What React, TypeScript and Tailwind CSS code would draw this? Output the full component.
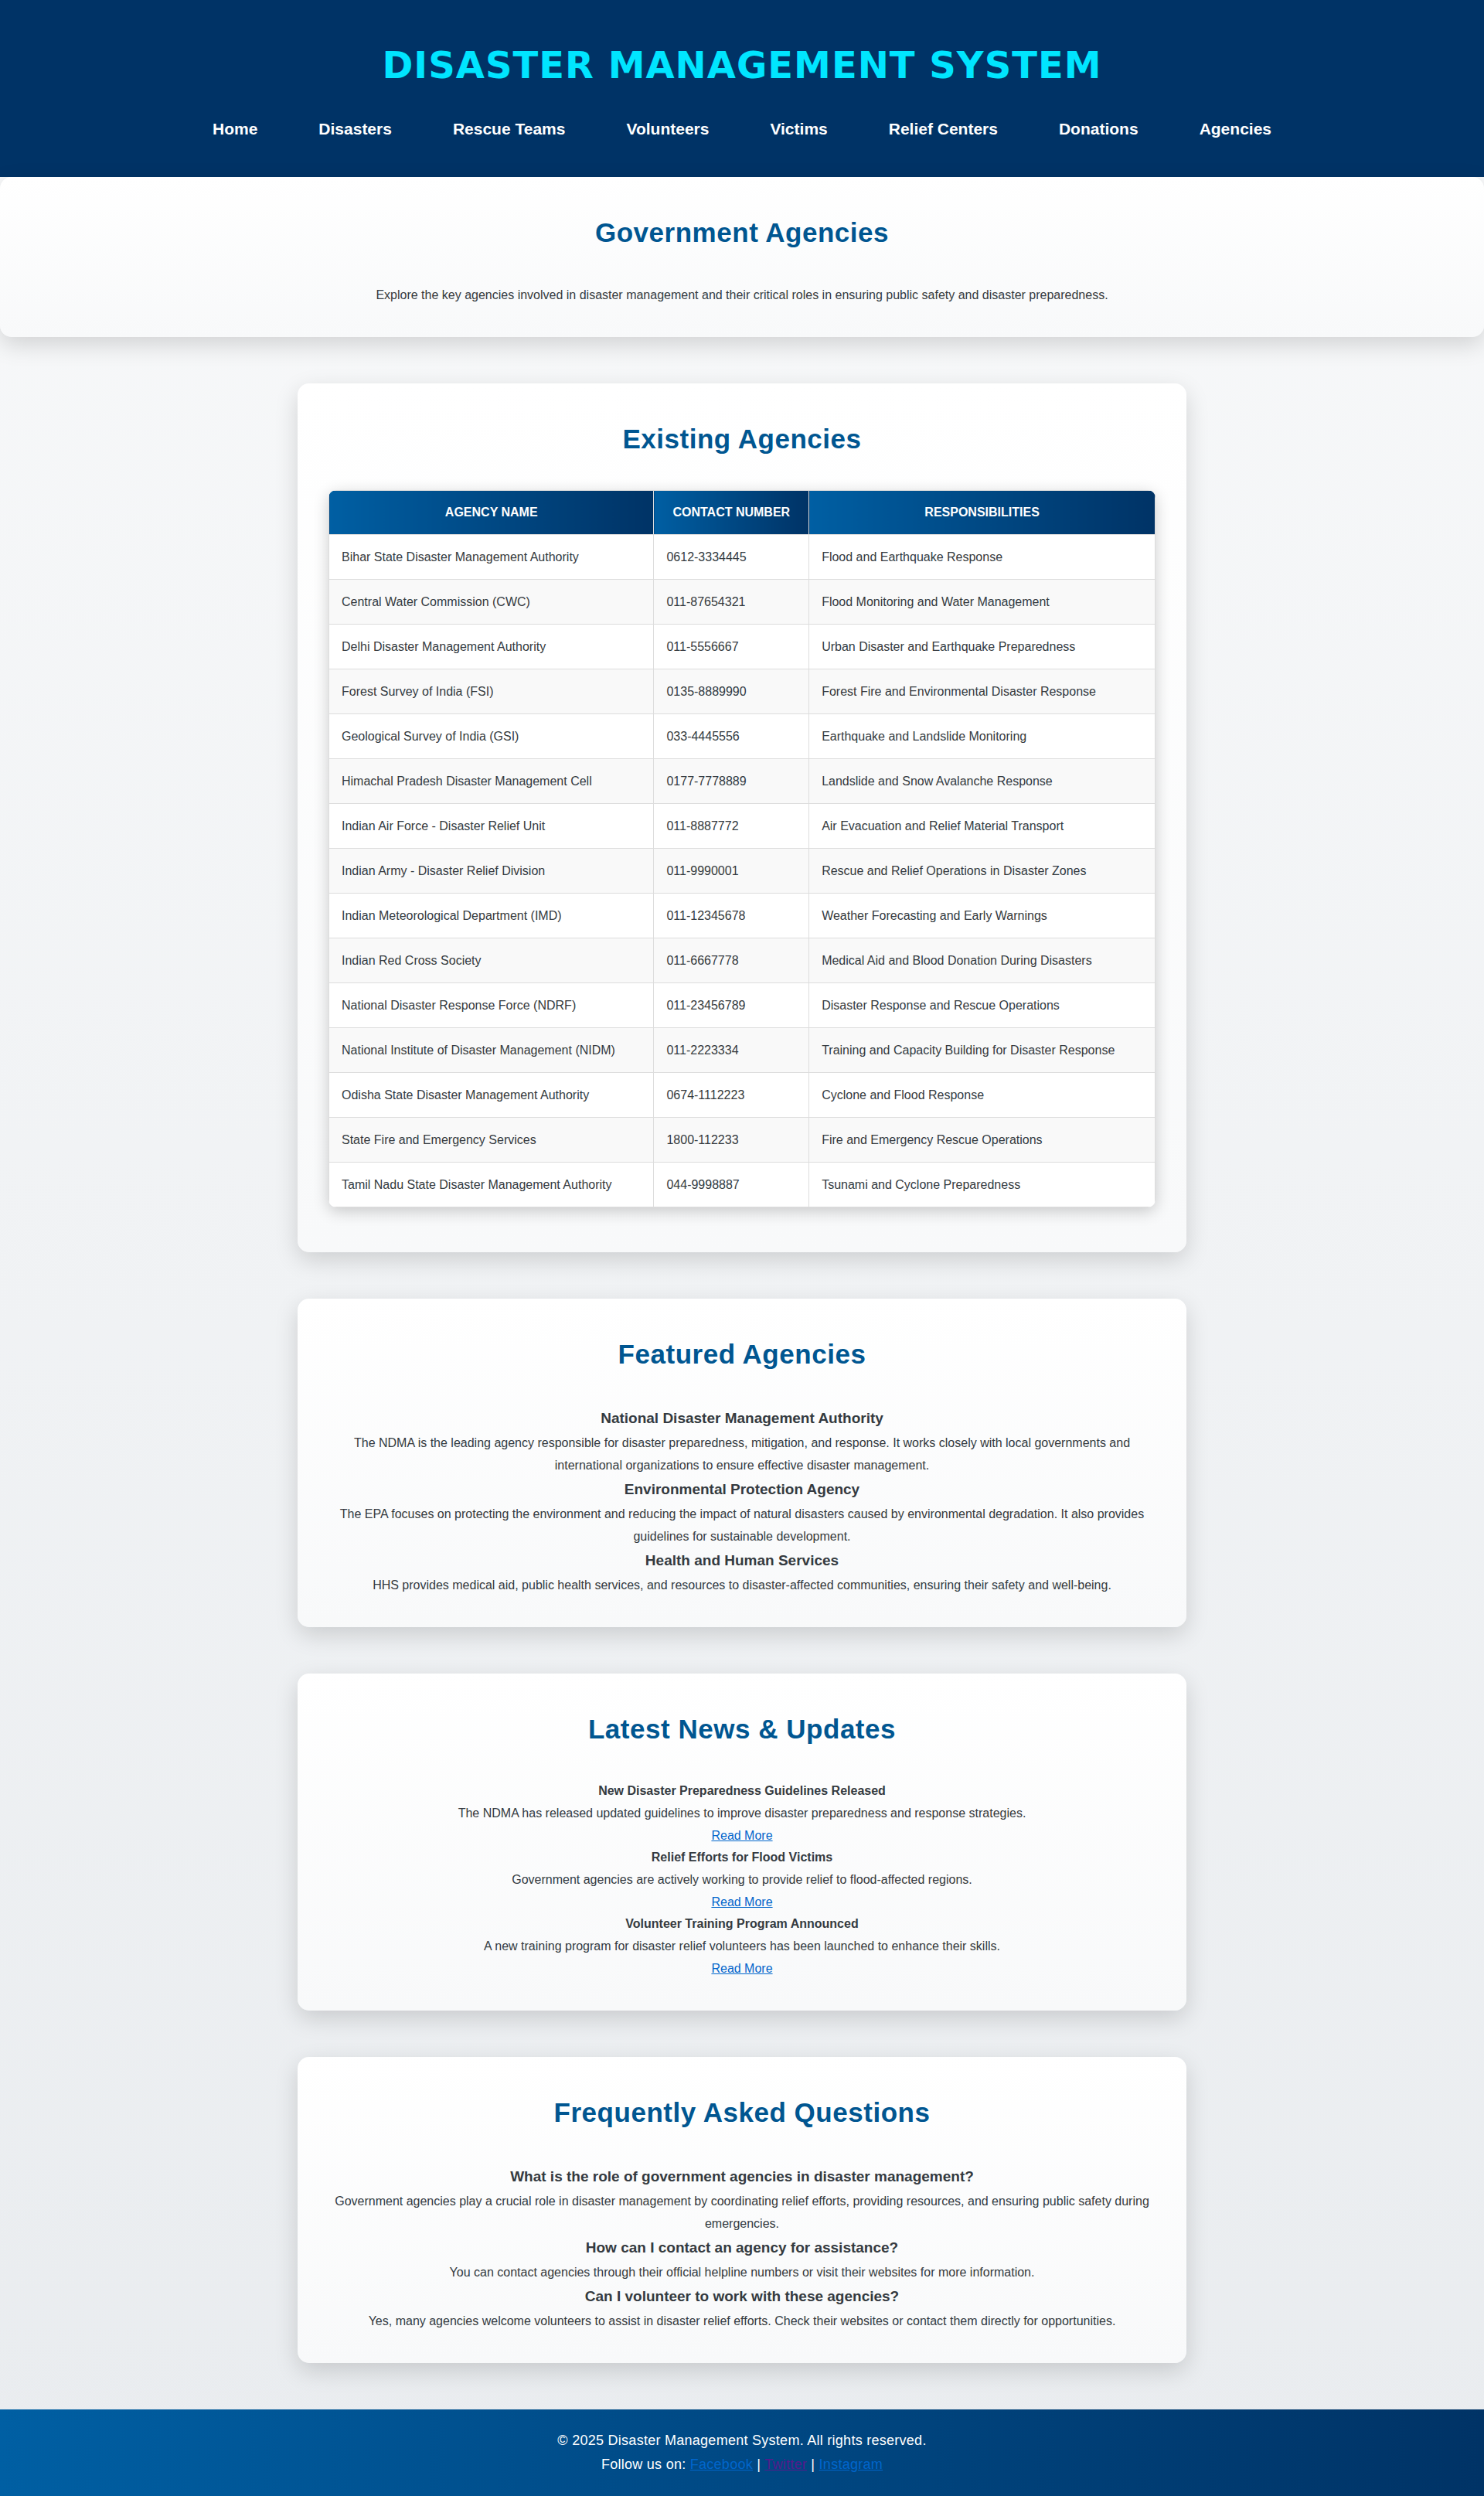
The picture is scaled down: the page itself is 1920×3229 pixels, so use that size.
import type { ReactNode } from "react";

const navItems = [
  "Home",
  "Disasters",
  "Rescue Teams",
  "Volunteers",
  "Victims",
  "Relief Centers",
  "Donations",
  "Agencies",
];

const agencies = [
  ["Bihar State Disaster Management Authority", "0612-3334445", "Flood and Earthquake Response"],
  ["Central Water Commission (CWC)", "011-87654321", "Flood Monitoring and Water Management"],
  ["Delhi Disaster Management Authority", "011-5556667", "Urban Disaster and Earthquake Preparedness"],
  ["Forest Survey of India (FSI)", "0135-8889990", "Forest Fire and Environmental Disaster Response"],
  ["Geological Survey of India (GSI)", "033-4445556", "Earthquake and Landslide Monitoring"],
  ["Himachal Pradesh Disaster Management Cell", "0177-7778889", "Landslide and Snow Avalanche Response"],
  ["Indian Air Force - Disaster Relief Unit", "011-8887772", "Air Evacuation and Relief Material Transport"],
  ["Indian Army - Disaster Relief Division", "011-9990001", "Rescue and Relief Operations in Disaster Zones"],
  ["Indian Meteorological Department (IMD)", "011-12345678", "Weather Forecasting and Early Warnings"],
  ["Indian Red Cross Society", "011-6667778", "Medical Aid and Blood Donation During Disasters"],
  ["National Disaster Response Force (NDRF)", "011-23456789", "Disaster Response and Rescue Operations"],
  ["National Institute of Disaster Management (NIDM)", "011-2223334", "Training and Capacity Building for Disaster Response"],
  ["Odisha State Disaster Management Authority", "0674-1112223", "Cyclone and Flood Response"],
  ["State Fire and Emergency Services", "1800-112233", "Fire and Emergency Rescue Operations"],
  ["Tamil Nadu State Disaster Management Authority", "044-9998887", "Tsunami and Cyclone Preparedness"],
];

const featured = [
  [
    "National Disaster Management Authority",
    "The NDMA is the leading agency responsible for disaster preparedness, mitigation, and response. It works closely with local governments and international organizations to ensure effective disaster management.",
  ],
  [
    "Environmental Protection Agency",
    "The EPA focuses on protecting the environment and reducing the impact of natural disasters caused by environmental degradation. It also provides guidelines for sustainable development.",
  ],
  [
    "Health and Human Services",
    "HHS provides medical aid, public health services, and resources to disaster-affected communities, ensuring their safety and well-being.",
  ],
];

const news = [
  [
    "New Disaster Preparedness Guidelines Released",
    "The NDMA has released updated guidelines to improve disaster preparedness and response strategies.",
  ],
  [
    "Relief Efforts for Flood Victims",
    "Government agencies are actively working to provide relief to flood-affected regions.",
  ],
  [
    "Volunteer Training Program Announced",
    "A new training program for disaster relief volunteers has been launched to enhance their skills.",
  ],
];

const faqs = [
  [
    "What is the role of government agencies in disaster management?",
    "Government agencies play a crucial role in disaster management by coordinating relief efforts, providing resources, and ensuring public safety during emergencies.",
  ],
  [
    "How can I contact an agency for assistance?",
    "You can contact agencies through their official helpline numbers or visit their websites for more information.",
  ],
  [
    "Can I volunteer to work with these agencies?",
    "Yes, many agencies welcome volunteers to assist in disaster relief efforts. Check their websites or contact them directly for opportunities.",
  ],
];

function Panel({ title, wide, children }: { title: string; wide?: boolean; children: ReactNode }) {
  return (
    <section
      className={
        "rounded-[15px] bg-linear-to-b from-white to-[#f8f9fa] p-10 text-center shadow-[0_10px_30px_rgba(0,0,0,0.15)] " +
        (wide ? "w-full" : "mx-auto w-full max-w-[1150px]")
      }
    >
      <h2 className="mb-[35px] text-[35px] leading-[63px] font-bold tracking-[0.015em] text-[#005691]">{title}</h2>
      {children}
    </section>
  );
}

function Entries({ items }: { items: string[][] }) {
  return (
    <>
      {items.map(([title, text]) => (
        <div key={title}>
          <h3 className="text-[19px] leading-[34px] font-bold">{title}</h3>
          <p>{text}</p>
        </div>
      ))}
    </>
  );
}

export default function App() {
  return (
    <div className="bg-linear-to-b from-[#f8f9fa] to-[#e9ecef] font-['Liberation_Sans',Arial,sans-serif] text-base leading-[29px] text-[#343a40]">
      <header className="flex flex-col items-center bg-[#003366] px-5 pt-10 pb-11 text-center">
        <h1 className="font-[Verdana,'DejaVu_Sans',sans-serif] text-5xl leading-[88px] font-bold tracking-[1px] text-[#00e5ff] uppercase">
          Disaster Management System
        </h1>
        <nav aria-label="Main" className="mt-5">
          <ul className="flex flex-wrap justify-center gap-x-[39px]">
            {navItems.map((item) => (
              <li key={item}>
                <a href="#" className="block px-5 text-[21px] leading-[37px] font-bold text-white">
                  {item}
                </a>
              </li>
            ))}
          </ul>
        </nav>
      </header>

      <main className="flex flex-col gap-[60px] pb-[60px]">
        <Panel title="Government Agencies" wide>
          <p>
            Explore the key agencies involved in disaster management and their critical roles in ensuring public safety
            and disaster preparedness.
          </p>
        </Panel>

        <Panel title="Existing Agencies">
          <table className="mb-[18px] w-full border-collapse overflow-hidden rounded-[10px] bg-white text-left shadow-[0_5px_20px_rgba(0,0,0,0.2)]">
            <thead>
              <tr>
                {["Agency Name", "Contact Number", "Responsibilities"].map((label) => (
                  <th
                    key={label}
                    scope="col"
                    className="border border-[#dddddd] bg-linear-to-r from-[#005fa3] to-[#003366] px-4 py-[14px] text-center leading-7 font-bold text-white uppercase"
                  >
                    {label}
                  </th>
                ))}
              </tr>
            </thead>
            <tbody>
              {agencies.map(([name, phone, duty]) => (
                <tr key={name} className="even:bg-[#f9f9f9]">
                  <td className="border border-[#dddddd] px-4 py-[14px]">{name}</td>
                  <td className="border border-[#dddddd] px-4 py-[14px]">{phone}</td>
                  <td className="border border-[#dddddd] px-4 py-[14px]">{duty}</td>
                </tr>
              ))}
            </tbody>
          </table>
        </Panel>

        <Panel title="Featured Agencies">
          <Entries items={featured} />
        </Panel>

        <Panel title="Latest News & Updates">
          {news.map(([title, text]) => (
            <div key={title}>
              <h4 className="leading-7 font-bold">{title}</h4>
              <p>{text}</p>
              <p>
                <a href="#" className="text-[#0066cc] underline">
                  Read More
                </a>
              </p>
            </div>
          ))}
        </Panel>

        <Panel title="Frequently Asked Questions">
          <Entries items={faqs} />
        </Panel>
      </main>

      <footer className="bg-linear-to-r from-[#005fa3] to-[#003366] py-[25px] text-center text-lg leading-[31px] tracking-[0.015em] text-white">
        <p>© 2025 Disaster Management System. All rights reserved.</p>
        <p>
          Follow us on:{" "}
          <a href="#" className="text-[#0066cc] underline">
            Facebook
          </a>{" "}
          |{" "}
          <a href="#" className="text-[#551a8b] underline">
            Twitter
          </a>{" "}
          |{" "}
          <a href="#" className="text-[#0066cc] underline">
            Instagram
          </a>
        </p>
      </footer>
    </div>
  );
}
